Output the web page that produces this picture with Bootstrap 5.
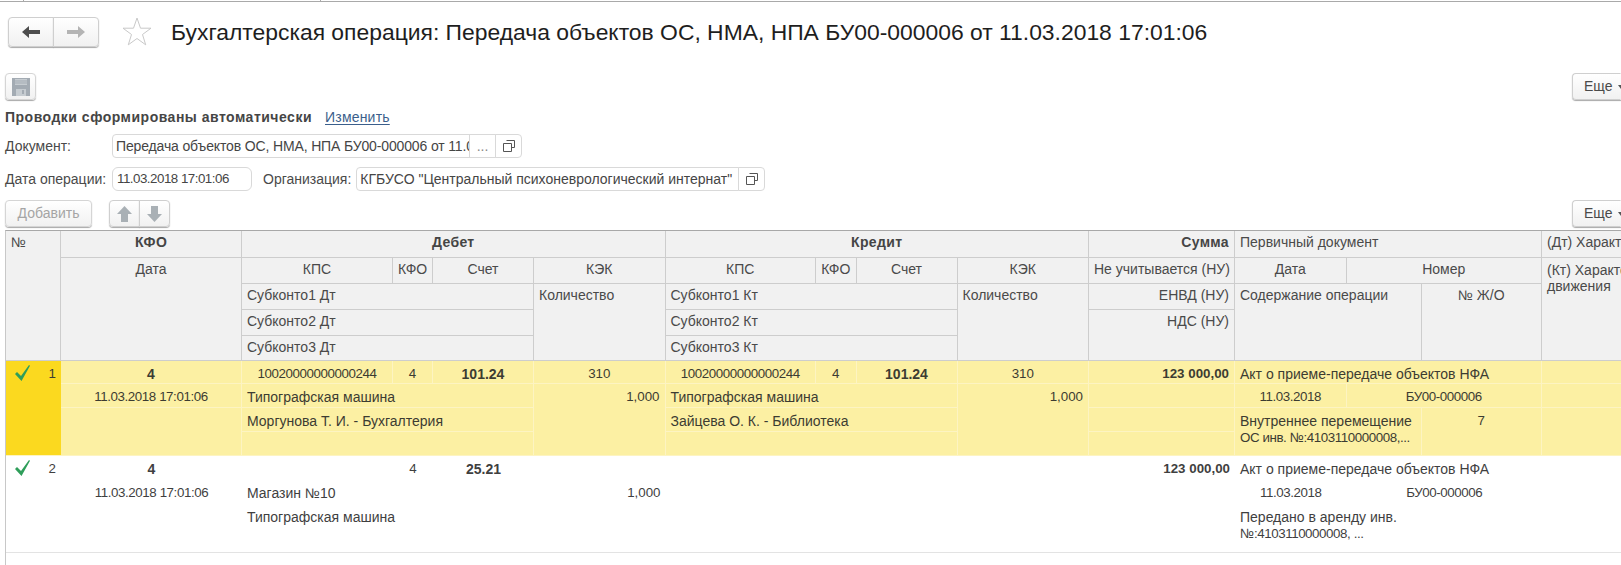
<!DOCTYPE html>
<html lang="ru">
<head>
<meta charset="utf-8">
<title>Бухгалтерская операция</title>
<link href="https://cdn.jsdelivr.net/npm/bootstrap@5.3.0/dist/css/bootstrap.min.css" rel="stylesheet">
<style>
html,body{height:565px;overflow:hidden;background:#fff}
body{font-family:"Liberation Sans",Arial,sans-serif;font-size:14px;color:#4a4a4a}
.topstrip{height:2px;border-bottom:1px solid #a9a9a9;padding-left:23px}
.tick{width:297px;height:1px;border-left:1px solid #a9a9a9}
.headrow{height:62px;padding:0 0 3px 8px}
.btn-1c{--bs-btn-padding-x:0;--bs-btn-padding-y:0;--bs-btn-font-size:14px;--bs-btn-color:#4a4a4a;--bs-btn-border-color:#cfcfcf;--bs-btn-border-radius:4px;--bs-btn-disabled-color:#a5a5a5;--bs-btn-disabled-border-color:#d5d5d5;--bs-btn-disabled-opacity:1;background:linear-gradient(#fff,#f1f1f1);box-shadow:0 1px 1px #a8a8a8;display:inline-flex;align-items:center;justify-content:center;height:27px}
.btn-1c:disabled{background:linear-gradient(#fff,#f1f1f1)}
.nav-group .btn-1c{width:46px;height:30px}
.nav-group{margin-right:23px}
.star{margin-right:19px}
.page-title{font-size:22.88px;font-weight:400;color:#1e1e1e;margin:0;line-height:34px}
.row-save{height:27px;padding-left:5px;margin-top:9px}
.btn-save{width:31px}
.btn-more{width:49px;justify-content:flex-start;padding-left:11px!important;border-right-color:transparent;border-radius:4px 0 0 4px}
.caret-1c{width:0;height:0;border:3px solid transparent;border-top:4px solid #555;border-bottom:0;margin-left:5px}
.autotxt{height:34px;padding-left:5px;font-weight:700;color:#454545;letter-spacing:.5px}
.autotxt a{font-weight:400;color:#3b5f8c;margin-left:13px;letter-spacing:.2px;text-underline-offset:2px}
.frow{height:24px;padding-left:5px;margin-bottom:9px}
.lbl{white-space:nowrap}
.lbl-a{width:107px}
.fld{--bs-border-radius:4px;height:24px;padding:0 3px;font-size:14px;line-height:22px;color:#454545;border-color:#d9d9d9;white-space:nowrap;overflow:hidden;flex:none}
.fld-doc{width:358px;letter-spacing:-.14px}
.fld-date{width:140px;padding-left:4px}
.fld-org{width:383px}
.addon{width:27px;height:24px;border:1px solid #d9d9d9;margin-left:-1px;background:#fff;flex:none;display:flex;align-items:center;justify-content:center;color:#888}
.addon:last-child{border-radius:0 4px 4px 0}
.fld-join{border-radius:4px 0 0 4px}
.org-lbl{margin:0 5px 0 11px}
.row-add{height:27px;padding-left:5px;margin-top:7px}
.btn-add{width:87px}
.updown{margin-left:17px}
.updown .btn-1c{width:31px}
.tbl-clip{overflow:hidden;margin-top:3px;height:336px}
.tbl{display:grid;margin-left:5px;height:336px;
 grid-template-columns:55px 181px 151px 40px 101px 131.5px 150.5px 40.5px 101px 131.5px 146px 111.5px 75px 120.5px 80px;
 grid-template-rows:27px 26px 25.5px 26px 25px repeat(4,23.75px) repeat(4,24.25px);align-content:start;
 border-top:1px solid #a8a8a8;border-left:1px solid #c8c8c8;line-height:26px;color:#4a4a4a}
.hc{background:#f1f1f1;border-right:1px solid #cdcdcd;border-bottom:1px solid #cdcdcd;padding:0 5px;white-space:nowrap;overflow:hidden;line-height:23px}
.hb{font-weight:700;color:#454545}
.hc.hb{letter-spacing:.35px}
.yc{background:#fcf0a3;border-right:1px solid #fdf4c2;border-bottom:1px solid #fdf4c2;padding:0 5px;white-space:nowrap;color:#3c3c32}
.wc{padding:0 5px;white-space:nowrap;color:#3f3f3f}
.rowend{grid-column:1/-1;border-bottom:1px solid #e3e3e3;grid-row:10/14;pointer-events:none}
.markcell{display:flex;justify-content:space-between;padding:0 5px 0 9px;align-items:flex-start}
.markcell svg{margin-top:4px}
.mark-on{background:#fbd91f;border:0;border-bottom:1px solid #fdf4c2}
.wrap2{line-height:16px;padding-top:5px}
.dt-wrap{line-height:16px;padding-top:4px}
.dg{font-size:13.33px;letter-spacing:-.42px}
.fld.dg{letter-spacing:-.5px}
.nm{font-size:13.33px}
.tc{text-align:center}.tr{text-align:right}
.gx1{grid-column-start:1}.gx2{grid-column-start:2}.gx3{grid-column-start:3}.gx4{grid-column-start:4}.gx5{grid-column-start:5}.gx6{grid-column-start:6}.gx7{grid-column-start:7}.gx8{grid-column-start:8}.gx9{grid-column-start:9}.gx10{grid-column-start:10}.gx11{grid-column-start:11}.gx12{grid-column-start:12}.gx13{grid-column-start:13}.gx14{grid-column-start:14}.gx15{grid-column-start:15}
.gw2{grid-column-end:span 2}.gw3{grid-column-end:span 3}.gw4{grid-column-end:span 4}
.gy1{grid-row-start:1}.gy2{grid-row-start:2}.gy3{grid-row-start:3}.gy4{grid-row-start:4}.gy5{grid-row-start:5}.gy6{grid-row-start:6}.gy7{grid-row-start:7}.gy8{grid-row-start:8}.gy9{grid-row-start:9}.gy10{grid-row-start:10}.gy11{grid-row-start:11}.gy12{grid-row-start:12}.gy13{grid-row-start:13}
.gh2{grid-row-end:span 2}.gh3{grid-row-end:span 3}.gh4{grid-row-end:span 4}.gh5{grid-row-end:span 5}
</style>
</head>
<body>
<div class="topstrip d-flex"><span class="tick"></span><span class="tick"></span></div>
<div class="headrow d-flex align-items-center">
  <div class="btn-group nav-group" role="group">
    <button class="btn btn-1c" type="button" aria-label="Назад"><svg width="18" height="12" viewBox="0 0 18 12"><path d="M0 6 7 0v4h11v4H7v4z" fill="#4d4d4d"/></svg></button>
    <button class="btn btn-1c" type="button" aria-label="Вперед"><svg width="18" height="12" viewBox="0 0 18 12"><path d="M18 6 11 0v4H0v4h11v4z" fill="#b4b4b4"/></svg></button>
  </div>
  <svg class="star" width="30" height="29" viewBox="0 0 30 29"><path d="M15 1l3.500 10.200H29l-8.500 6.300 3.200 10.300L15 21.500l-8.700 6.300 3.200-10.300L1 11.200h10.500z" fill="#fff" stroke="#c9c9c9"/></svg>
  <h1 class="page-title">Бухгалтерская операция: Передача объектов ОС, НМА, НПА БУ00-000006 от 11.03.2018 17:01:06</h1>
</div>
<div class="row-save d-flex justify-content-between">
  <button class="btn btn-1c btn-save" type="button" disabled aria-label="Записать"><svg width="18" height="18" viewBox="0 0 18 18"><path d="M0 0h18v18H0z" fill="#a3abb3"/><path d="M3 1h12v6H3z" fill="#c6ccd1"/><path d="M3 3h12M3 5h12" stroke="#a3abb3"/><path d="M4 11h10v7H4z" fill="#c6ccd1"/><path d="M10 12h2v4h-2z" fill="#a3abb3"/></svg></button>
  <button class="btn btn-1c btn-more" type="button">Еще<span class="caret-1c"></span></button>
</div>
<div class="autotxt d-flex align-items-center"><span>Проводки сформированы автоматически</span> <a href="#">Изменить</a></div>
<div class="frow d-flex align-items-center">
  <span class="lbl lbl-a">Документ:</span>
  <div class="form-control fld fld-doc fld-join">Передача объектов ОС, НМА, НПА БУ00-000006 от 11.0</div>
  <span class="addon">...</span>
  <span class="addon"><svg width="12" height="12" viewBox="0 0 12 12" fill="none" stroke="#555"><path d="M3.500.5h8v7h-3M.5 3.500h8v8h-8z"/></svg></span>
</div>
<div class="frow d-flex align-items-center">
  <span class="lbl lbl-a">Дата операции:</span>
  <div class="form-control fld fld-date dg">11.03.2018 17:01:06</div>
  <span class="lbl org-lbl">Организация:</span>
  <div class="form-control fld fld-org fld-join">КГБУСО "Центральный психоневрологический интернат"</div>
  <span class="addon"><svg width="12" height="12" viewBox="0 0 12 12" fill="none" stroke="#555"><path d="M3.500.5h8v7h-3M.5 3.500h8v8h-8z"/></svg></span>
</div>
<div class="row-add d-flex justify-content-between">
  <div class="d-flex">
    <button class="btn btn-1c btn-add" type="button" disabled>Добавить</button>
    <div class="btn-group updown" role="group">
      <button class="btn btn-1c" type="button" aria-label="Вверх"><svg width="15" height="16" viewBox="0 0 15 16"><path d="M7.500 0 15 8h-4v8H4V8H0z" fill="#a9b0b5"/></svg></button>
      <button class="btn btn-1c" type="button" aria-label="Вниз"><svg width="15" height="16" viewBox="0 0 15 16"><path d="M7.500 16 15 8h-4V0H4v8H0z" fill="#a9b0b5"/></svg></button>
    </div>
  </div>
  <button class="btn btn-1c btn-more" type="button">Еще<span class="caret-1c"></span></button>
</div>

<div class="tbl-clip">
<div class="d-grid tbl">
  <!-- header -->
  <div class="hc gx1 gy1 gh5">№</div>
  <div class="hc hb tc gx2 gy1">КФО</div>
  <div class="hc hb tc gx3 gy1 gw4">Дебет</div>
  <div class="hc hb tc gx7 gy1 gw4">Кредит</div>
  <div class="hc hb tr gx11 gy1">Сумма</div>
  <div class="hc gx12 gy1 gw3">Первичный документ</div>
  <div class="hc gx15 gy1">(Дт) Характеристика движения</div>

  <div class="hc tc gx2 gy2 gh4">Дата</div>
  <div class="hc tc gx3 gy2">КПС</div>
  <div class="hc tc gx4 gy2">КФО</div>
  <div class="hc tc gx5 gy2">Счет</div>
  <div class="hc tc gx6 gy2">КЭК</div>
  <div class="hc tc gx7 gy2">КПС</div>
  <div class="hc tc gx8 gy2">КФО</div>
  <div class="hc tc gx9 gy2">Счет</div>
  <div class="hc tc gx10 gy2">КЭК</div>
  <div class="hc tr gx11 gy2">Не учитывается (НУ)</div>
  <div class="hc tc gx12 gy2">Дата</div>
  <div class="hc tc gx13 gy2 gw2">Номер</div>
  <div class="hc dt-wrap gx15 gy2 gh4">(Кт) Характеристика<br>движения</div>

  <div class="hc gx3 gy3 gw3">Субконто1 Дт</div>
  <div class="hc gx6 gy3 gh3">Количество</div>
  <div class="hc gx7 gy3 gw3">Субконто1 Кт</div>
  <div class="hc gx10 gy3 gh3">Количество</div>
  <div class="hc tr gx11 gy3">ЕНВД (НУ)</div>
  <div class="hc gx12 gy3 gw2 gh3">Содержание операции</div>
  <div class="hc tc gx14 gy3 gh3">№ Ж/О</div>
  <div class="hc gx3 gy4 gw3">Субконто2 Дт</div>
  <div class="hc gx7 gy4 gw3">Субконто2 Кт</div>
  <div class="hc tr gx11 gy4 gh2">НДС (НУ)</div>
  <div class="hc gx3 gy5 gw3">Субконто3 Дт</div>
  <div class="hc gx7 gy5 gw3">Субконто3 Кт</div>

  <!-- строка 1 -->
  <div class="yc mark-on markcell gx1 gy6 gh4"><svg width="16" height="16" viewBox="0 0 16 16"><path d="M0 9l2-2 4 4L14 0l1 .8L6.500 16z" fill="#2f9e5a"/></svg><span class="nm">1</span></div>
  <div class="yc tc hb gx2 gy6">4</div>
  <div class="yc tc dg gx2 gy7">11.03.2018 17:01:06</div>
  <div class="yc gx2 gy8 gh2"></div>
  <div class="yc tc dg gx3 gy6">10020000000000244</div>
  <div class="yc tc nm gx4 gy6">4</div>
  <div class="yc tc hb gx5 gy6">101.24</div>
  <div class="yc tc nm gx6 gy6">310</div>
  <div class="yc gx3 gy7 gw3">Типографская машина</div>
  <div class="yc gx3 gy8 gw3">Моргунова Т. И. - Бухгалтерия</div>
  <div class="yc gx3 gy9 gw3"></div>
  <div class="yc tr nm gx6 gy7 gh3">1,000</div>
  <div class="yc tc dg gx7 gy6">10020000000000244</div>
  <div class="yc tc nm gx8 gy6">4</div>
  <div class="yc tc hb gx9 gy6">101.24</div>
  <div class="yc tc nm gx10 gy6">310</div>
  <div class="yc gx7 gy7 gw3">Типографская машина</div>
  <div class="yc gx7 gy8 gw3">Зайцева О. К. - Библиотека</div>
  <div class="yc gx7 gy9 gw3"></div>
  <div class="yc tr nm gx10 gy7 gh3">1,000</div>
  <div class="yc tr hb nm gx11 gy6">123 000,00</div>
  <div class="yc gx11 gy7"></div>
  <div class="yc gx11 gy8"></div>
  <div class="yc gx11 gy9"></div>
  <div class="yc gx12 gy6 gw3">Акт о приеме-передаче объектов НФА</div>
  <div class="yc tc dg gx12 gy7">11.03.2018</div>
  <div class="yc tc dg gx13 gy7 gw2">БУ00-000006</div>
  <div class="yc wrap2 gx12 gy8 gw2 gh2">Внутреннее перемещение<br><span class="dg">ОС инв. №:4103110000008,...</span></div>
  <div class="yc tc nm gx14 gy8 gh2">7</div>
  <div class="yc gx15 gy6"></div>
  <div class="yc gx15 gy7"></div>
  <div class="yc gx15 gy8 gh2"></div>

  <!-- строка 2 -->
  <div class="wc markcell gx1 gy10 gh4"><svg width="16" height="16" viewBox="0 0 16 16"><path d="M0 9l2-2 4 4L14 0l1 .8L6.500 16z" fill="#2f9e5a"/></svg><span class="nm">2</span></div>
  <div class="wc tc hb gx2 gy10">4</div>
  <div class="wc tc dg gx2 gy11">11.03.2018 17:01:06</div>
  <div class="wc tc nm gx4 gy10">4</div>
  <div class="wc tc hb gx5 gy10">25.21</div>
  <div class="wc gx3 gy11 gw3">Магазин №10</div>
  <div class="wc gx3 gy12 gw3">Типографская машина</div>
  <div class="wc tr nm gx6 gy11">1,000</div>
  <div class="wc tr hb nm gx11 gy10">123 000,00</div>
  <div class="wc gx12 gy10 gw3">Акт о приеме-передаче объектов НФА</div>
  <div class="wc tc dg gx12 gy11">11.03.2018</div>
  <div class="wc tc dg gx13 gy11 gw2">БУ00-000006</div>
  <div class="wc wrap2 gx12 gy12 gw2 gh2">Передано в аренду инв.<br><span class="dg">№:4103110000008, ...</span></div>
  <div class="rowend"></div>
</div>
</div>
<script src="https://cdn.jsdelivr.net/npm/bootstrap@5.3.0/dist/js/bootstrap.bundle.min.js"></script>
</body>
</html>
